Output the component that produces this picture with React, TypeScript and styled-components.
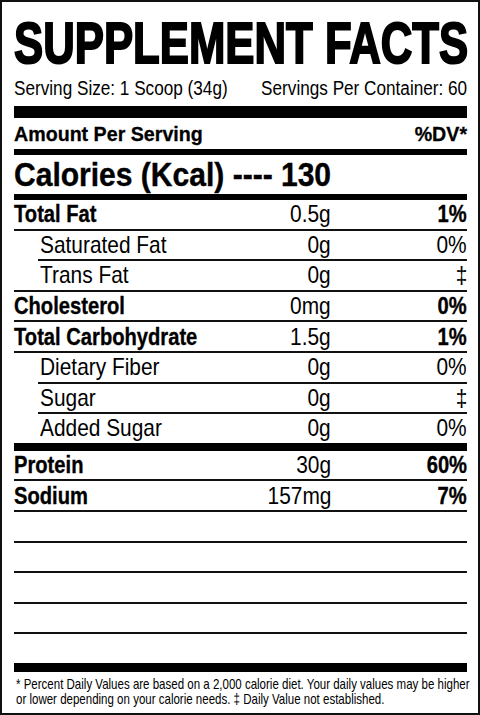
import React from "react";
import styled, { createGlobalStyle } from "styled-components";

// Helvetica Condensed is not installed: Liberation Sans (Arial metrics) squeezed with scaleX
const GlobalStyle = createGlobalStyle`
    html, body {
        margin: 0;
        padding: 0;
        background: #fff;
    }
    body {
        font-family: "Liberation Sans", Arial, Helvetica, sans-serif;
        color: #000;
    }
`

const Label = styled.div`
    box-sizing: border-box;
    width: 480px;
    height: 715px;
    border: 2px solid #111;
    padding: 0 11px 0 12px;
    display: flex;
    flex-direction: column;
    background: #fff;
    overflow: hidden;
`
const Squeeze = styled.span<{$s: number; $end?: boolean}>`
    display: inline-block;
    flex: none;
    white-space: nowrap;
    transform: scaleX(${p => p.$s});
    transform-origin: ${p => p.$end ? "100%" : "0"} 50%;
`
const Cell = styled.div<{$end?: boolean; $indent?: number}>`
    display: flex;
    min-width: 0;
    justify-content: ${p => p.$end ? "flex-end" : "flex-start"};
    padding-left: ${p => p.$indent ?? 0}px;
`
const Title = styled.h1`
    margin: 13px 0 0;
    display: flex;
    font-size: 57px;
    line-height: 57px;
    font-weight: 700;
    -webkit-text-stroke: 2px #000;
`
const ServingRow = styled.div`
    margin-top: 6px;
    height: 20px;
    line-height: 20px;
    font-size: 19.5px;
    display: grid;
    grid-template-columns: 1fr 1fr;
`
const Bar = styled.div<{$h: number; $top?: number}>`
    height: ${p => p.$h}px;
    margin-top: ${p => p.$top ?? 0}px;
    background: #000;
    flex: none;
`
const Rule = styled.div<{$inset?: boolean}>`
    height: 2px;
    background: #111;
    margin-left: ${p => p.$inset ? "24px" : "0"};
    flex: none;
`
const HeaderRow = styled.div`
    height: 31px;
    line-height: 31px;
    font-size: 21px;
    font-weight: 700;
    display: grid;
    grid-template-columns: 1fr 1fr;
    -webkit-text-stroke: 0.3px #000;
`
const Calories = styled.div`
    height: 39px;
    line-height: 39px;
    font-size: 33px;
    font-weight: 700;
    display: flex;
    -webkit-text-stroke: 0.4px #000;
`
const Row = styled.div`
    height: 28.6px;
    display: grid;
    grid-template-columns: 1fr 110px 136px;
    align-items: center;
    font-size: 24px;
    line-height: 1;
`
const Weight = styled.span<{$bold?: boolean}>`
    font-weight: ${p => p.$bold ? 700 : 400};
    -webkit-text-stroke: ${p => p.$bold ? "0.35px #000" : "0"};
`
const Footnote = styled.div`
    margin: 5px 0 0 2px;
    display: flex;
    flex-direction: column;
    font-size: 14.4px;
    line-height: 15px;
`

type Nutrient = {
    name: string;
    amount: string;
    dv: string;
    bold?: boolean;
    sub?: boolean;
    rule: "full" | "inset" | "none";
}

const nutrients: Nutrient[] = [
    {name: "Total Fat", amount: "0.5g", dv: "1%", bold: true, rule: "full"},
    {name: "Saturated Fat", amount: "0g", dv: "0%", sub: true, rule: "inset"},
    {name: "Trans Fat", amount: "0g", dv: "‡", sub: true, rule: "full"},
    {name: "Cholesterol", amount: "0mg", dv: "0%", bold: true, rule: "full"},
    {name: "Total Carbohydrate", amount: "1.5g", dv: "1%", bold: true, rule: "full"},
    {name: "Dietary Fiber", amount: "0g", dv: "0%", sub: true, rule: "inset"},
    {name: "Sugar", amount: "0g", dv: "‡", sub: true, rule: "inset"},
    {name: "Added Sugar", amount: "0g", dv: "0%", sub: true, rule: "none"},
]

const extras: Nutrient[] = [
    {name: "Protein", amount: "30g", dv: "60%", bold: true, rule: "full"},
    {name: "Sodium", amount: "157mg", dv: "7%", bold: true, rule: "full"},
]

const BOLD = 0.84
const REGULAR = 0.87

const NutrientRow = ({n}: {n: Nutrient}) => (
    <>
        <Row>
            <Cell $indent={n.sub ? 26 : 0}>
                <Squeeze $s={n.bold ? BOLD : REGULAR}><Weight $bold={n.bold}>{n.name}</Weight></Squeeze>
            </Cell>
            <Cell $end>
                <Squeeze $end $s={REGULAR}>{n.amount}</Squeeze>
            </Cell>
            <Cell $end>
                <Squeeze $end $s={n.bold ? BOLD : REGULAR}><Weight $bold={n.bold}>{n.dv}</Weight></Squeeze>
            </Cell>
        </Row>
        {n.rule !== "none" && <Rule $inset={n.rule === "inset"} />}
    </>
)

const App = () => {
    return (
        <>
            <GlobalStyle />
            <Label>
                <Title><Squeeze $s={0.767}>SUPPLEMENT FACTS</Squeeze></Title>
                <ServingRow>
                    <Cell><Squeeze $s={0.88}>Serving Size: 1 Scoop (34g)</Squeeze></Cell>
                    <Cell $end><Squeeze $end $s={0.88}>Servings Per Container: 60</Squeeze></Cell>
                </ServingRow>
                <Bar $h={12} $top={8} />
                <HeaderRow>
                    <Cell><Squeeze $s={0.935}>Amount Per Serving</Squeeze></Cell>
                    <Cell $end><Squeeze $end $s={0.935}>%DV*</Squeeze></Cell>
                </HeaderRow>
                <Bar $h={6} />
                <Calories><Squeeze $s={0.91}>Calories (Kcal) ---- 130</Squeeze></Calories>
                <Bar $h={6} />
                {nutrients.map(n => <NutrientRow key={n.name} n={n} />)}
                <Bar $h={8} />
                {extras.map(n => <NutrientRow key={n.name} n={n} />)}
                {[0, 1, 2, 3].map(i => (
                    <React.Fragment key={i}>
                        <Row />
                        <Rule />
                    </React.Fragment>
                ))}
                <Row />
                <Bar $h={9} />
                <Footnote>
                    <Cell><Squeeze $s={0.8}>* Percent Daily Values are based on a 2,000 calorie diet. Your daily values may be higher</Squeeze></Cell>
                    <Cell><Squeeze $s={0.8}>or lower depending on your calorie needs. ‡ Daily Value not established.</Squeeze></Cell>
                </Footnote>
            </Label>
        </>
    )
}

export default App
